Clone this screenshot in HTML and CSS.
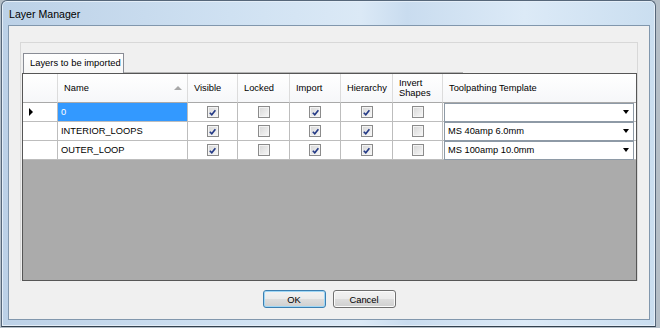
FILE: index.html
```html
<!DOCTYPE html>
<html lang="en">
<head>
    <meta charset="UTF-8">
    <title>Layer Manager</title>
    <link rel="stylesheet" href="styles.css">
</head>
<body>

    <div class="window">
        <div class="titlebar">Layer Manager</div>
        <div class="client">
            <div class="panel">
                <div class="tabstrip">
                    <div class="tab">Layers to be imported</div>
                    <div class="tabline"></div>
                </div>
                <div class="grid">
                    <div class="rows">
                        <!-- header -->
                        <div class="hcell corner"></div>
                        <div class="hcell name-head"><span>Name</span><span class="sort"></span></div>
                        <div class="hcell">Visible</div>
                        <div class="hcell">Locked</div>
                        <div class="hcell">Import</div>
                        <div class="hcell">Hierarchy</div>
                        <div class="hcell two">Invert<br>Shapes</div>
                        <div class="hcell last">Toolpathing Template</div>

                        <!-- row 1 -->
                        <div class="cell rowhead"><span class="current"></span></div>
                        <div class="cell name selected">0</div>
                        <div class="cell check"><span class="box on"><svg viewBox="0 0 10 10"><path d="M2 5.2 L4.2 7.6 L8.2 2.4"/></svg></span></div>
                        <div class="cell check"><span class="box"></span></div>
                        <div class="cell check"><span class="box on"><svg viewBox="0 0 10 10"><path d="M2 5.2 L4.2 7.6 L8.2 2.4"/></svg></span></div>
                        <div class="cell check"><span class="box on"><svg viewBox="0 0 10 10"><path d="M2 5.2 L4.2 7.6 L8.2 2.4"/></svg></span></div>
                        <div class="cell check"><span class="box"></span></div>
                        <div class="cell last"><div class="combo"><span></span><span class="arrow"></span></div></div>

                        <!-- row 2 -->
                        <div class="cell rowhead"></div>
                        <div class="cell name">INTERIOR_LOOPS</div>
                        <div class="cell check"><span class="box on"><svg viewBox="0 0 10 10"><path d="M2 5.2 L4.2 7.6 L8.2 2.4"/></svg></span></div>
                        <div class="cell check"><span class="box"></span></div>
                        <div class="cell check"><span class="box on"><svg viewBox="0 0 10 10"><path d="M2 5.2 L4.2 7.6 L8.2 2.4"/></svg></span></div>
                        <div class="cell check"><span class="box on"><svg viewBox="0 0 10 10"><path d="M2 5.2 L4.2 7.6 L8.2 2.4"/></svg></span></div>
                        <div class="cell check"><span class="box"></span></div>
                        <div class="cell last"><div class="combo"><span>MS 40amp 6.0mm</span><span class="arrow"></span></div></div>

                        <!-- row 3 -->
                        <div class="cell rowhead"></div>
                        <div class="cell name">OUTER_LOOP</div>
                        <div class="cell check"><span class="box on"><svg viewBox="0 0 10 10"><path d="M2 5.2 L4.2 7.6 L8.2 2.4"/></svg></span></div>
                        <div class="cell check"><span class="box"></span></div>
                        <div class="cell check"><span class="box on"><svg viewBox="0 0 10 10"><path d="M2 5.2 L4.2 7.6 L8.2 2.4"/></svg></span></div>
                        <div class="cell check"><span class="box on"><svg viewBox="0 0 10 10"><path d="M2 5.2 L4.2 7.6 L8.2 2.4"/></svg></span></div>
                        <div class="cell check"><span class="box"></span></div>
                        <div class="cell last"><div class="combo"><span>MS 100amp 10.0mm</span><span class="arrow"></span></div></div>
                    </div>
                </div>
            </div>
            <div class="buttons">
                <button class="btn default">OK</button>
                <button class="btn">Cancel</button>
            </div>
        </div>
    </div>

</body>
</html>
```

FILE: styles.css
```css
body {
    margin: 0;
    background: #b4bec7;
    font-family: "Liberation Sans", Arial, sans-serif;
}
.window {
    box-sizing: border-box;
    margin-left: 1px;
    width: 655px;
    height: 327px;
    border: 1px solid #56677a;
    border-bottom-color: #33414e;
    border-radius: 6px 6px 0 0;
    padding: 0 5px 6px 6px;
    display: flex;
    flex-direction: column;
    background: linear-gradient(to right, #bcd1e7 0%, #cfe1f2 35%, #dbe9f6 55%, #c9dcef 62%, #dceaf7 80%, #cadef0 100%);
    box-shadow: inset 0 0 0 1px #e4eef8;
}
.titlebar {
    height: 24px;
    line-height: 26px;
    padding-left: 1px;
    font-size: 10.6px;
    color: #000;
}
.client {
    box-sizing: border-box;
    height: 295px;
    border: 1px solid #8197ad;
    background: #f0f0f0;
}
.panel {
    margin: 16px 11px 0;
    padding-top: 10px;
    border: 1px solid #d8d8d8;
    border-bottom: 0;
}
.tabstrip {
    display: flex;
    height: 20px;
}
.tab {
    box-sizing: border-box;
    margin-left: 2px;
    width: 101px;
    height: 20px;
    padding-left: 6px;
    line-height: 18px;
    font-size: 9.4px;
    border: 1px solid #898c95;
    border-bottom: 0;
    background: linear-gradient(#ffffff, #f7f7f7);
}
.tabline {
    width: 339px;
    height: 19px;
    border-bottom: 1px solid #b5b5b5;
}
.grid {
    box-sizing: border-box;
    margin-left: 1px;
    width: 615px;
    height: 208px;
    border: 1px solid #565656;
    background: #ababab;
}
.rows {
    display: grid;
    grid-template-columns: 35px 130px 50px 52px 51px 52px 50px 193px;
    grid-template-rows: 29px 19px 19px 19px;
    font-size: 9.3px;
    color: #000;
}
.hcell {
    box-sizing: border-box;
    display: flex;
    align-items: center;
    padding-left: 6px;
    background: linear-gradient(#ffffff, #f6f7f9);
    border-right: 1px solid #dcdcdc;
    border-bottom: 1px solid #a9a9a9;
}
.hcell.two {
    line-height: 10px;
}
.hcell.last, .cell.last {
    border-right: 0;
}
.name-head {
    justify-content: space-between;
    padding-right: 5px;
}
.sort {
    width: 0;
    height: 0;
    border-left: 4px solid transparent;
    border-right: 4px solid transparent;
    border-bottom: 4px solid #a8a8a8;
}
.cell {
    box-sizing: border-box;
    display: flex;
    align-items: center;
    background: #fff;
    border-right: 1px solid #bdbdbd;
    border-bottom: 1px solid #bdbdbd;
}
.rowhead {
    padding-left: 6px;
}
.current {
    width: 0;
    height: 0;
    border-left: 4px solid #000;
    border-top: 4px solid transparent;
    border-bottom: 4px solid transparent;
}
.name {
    padding-left: 3px;
}
.selected {
    background: #3399ff;
    color: #fff;
}
.check {
    justify-content: center;
}
.box {
    box-sizing: border-box;
    display: flex;
    align-items: center;
    justify-content: center;
    width: 12px;
    height: 12px;
    border: 1px solid #8b8b8b;
    background: linear-gradient(135deg, #d6d6d6, #f8f8f8);
    box-shadow: inset 0 0 0 1px #f4f4f4;
}
.box svg {
    width: 9px;
    height: 9px;
}
.box path {
    fill: none;
    stroke: #243a86;
    stroke-width: 1.8;
}
.combo {
    box-sizing: border-box;
    display: flex;
    align-items: center;
    justify-content: space-between;
    width: 190px;
    height: 19px;
    margin-left: 1px;
    padding: 0 4px 0 3px;
    border: 1px solid #8e9aa6;
    background: #fff;
}
.arrow {
    width: 0;
    height: 0;
    border-left: 3.5px solid transparent;
    border-right: 3.5px solid transparent;
    border-top: 4px solid #000;
}
.buttons {
    display: flex;
    justify-content: center;
    gap: 7px;
    margin-top: 9px;
}
.btn {
    box-sizing: border-box;
    width: 63px;
    height: 18px;
    padding: 0;
    font-family: "Liberation Sans", Arial, sans-serif;
    font-size: 9.4px;
    color: #000;
    border: 1px solid #707070;
    border-radius: 3px;
    background: linear-gradient(#f2f2f2 0%, #ebebeb 48%, #dddddd 52%, #cfcfcf 100%);
    box-shadow: inset 0 0 0 1px #fbfbfb;
}
.btn.default {
    border-color: #3c7fb1;
    box-shadow: inset 0 0 0 1px #9fd7f6;
}
```
